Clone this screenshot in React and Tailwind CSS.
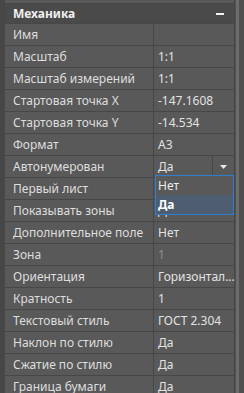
import React from "react";

const rows = [
  ["Имя", ""],
  ["Масштаб", "1:1"],
  ["Масштаб измерений", "1:1"],
  ["Стартовая точка X", "-147.1608"],
  ["Стартовая точка Y", "-14.534"],
  ["Формат", "A3"],
  ["Автонумерован", "Да", "combo"],
  ["Первый лист", ""],
  ["Показывать зоны", "Да"],
  ["Дополнительное поле", "Нет"],
  ["Зона", "1", "dim"],
  ["Ориентация", "Горизонтал..."],
  ["Кратность", "1"],
  ["Текстовый стиль", "ГОСТ 2.304"],
  ["Наклон по стилю", "Да"],
  ["Сжатие по стилю", "Да"],
  ["Граница бумаги", "Да"],
];

function Row({ label, value, kind }) {
  return (
    <div className="flex h-[22px] shrink-0 border-b border-[#474747]">
      <div className="w-[149px] shrink-0 pl-[8px] flex items-center border-r border-[#474747] text-[#dedede] whitespace-nowrap">
        {label}
      </div>
      <div className="flex-1 flex items-center min-w-0">
        <div
          className={
            "flex-1 pl-[4px] whitespace-nowrap " +
            (kind === "dim" ? "text-[#8e8e8e]" : "text-[#e2e2e2]")
          }
        >
          {value}
        </div>
        {kind === "combo" && (
          <div className="w-[22px] h-full border-l border-[#474747] flex items-center justify-center">
            <svg width="7" height="4" viewBox="0 0 7 4">
              <polygon points="0,0 7,0 3.5,4" fill="#e8e8e8" />
            </svg>
          </div>
        )}
      </div>
    </div>
  );
}

export default function App() {
  return (
    <div
      className="w-[244px] h-[393px] flex overflow-hidden bg-[#505050] text-[12px] leading-[15px]"
      style={{ fontFamily: '"Noto Sans", "Open Sans", Arial, sans-serif' }}
    >
      <div className="w-[5px] shrink-0 bg-[#474747]" />
      <div className="w-[229px] shrink-0 relative flex flex-col bg-[#595959]">
        <div className="h-[4px] shrink-0 border-b border-[#474747]" />
        <div className="h-[20px] shrink-0 border-b border-[#474747] bg-[#4a4a4a] flex items-center justify-between pl-[8px] pr-[10px]">
          <span className="font-bold text-[#f0f0f0]">Механика</span>
          <span className="w-[8px] h-[2px] bg-[#f2f2f2]" />
        </div>
        {rows.map(([l, v, k]) => (
          <Row key={l} label={l} value={v} kind={k} />
        ))}
        <div className="absolute left-[150px] top-[175px] w-[79px] h-[40px] border border-[#2f7fd0] bg-[#595959] flex flex-col">
          <div className="h-[19px] flex items-center pl-[2px] text-[#ececec]">Нет</div>
          <div className="flex-1 flex items-center pl-[2px] bg-[#4e5e70] font-bold text-white">Да</div>
        </div>
      </div>
      <div className="w-[1px] shrink-0 bg-[#464646]" />
      <div className="w-[1px] shrink-0 bg-[#505050]" />
      <div className="w-[3px] shrink-0 bg-[#6c6c6c]" />
      <div className="w-[5px] shrink-0 bg-[#4f4f4f]" />
    </div>
  );
}
